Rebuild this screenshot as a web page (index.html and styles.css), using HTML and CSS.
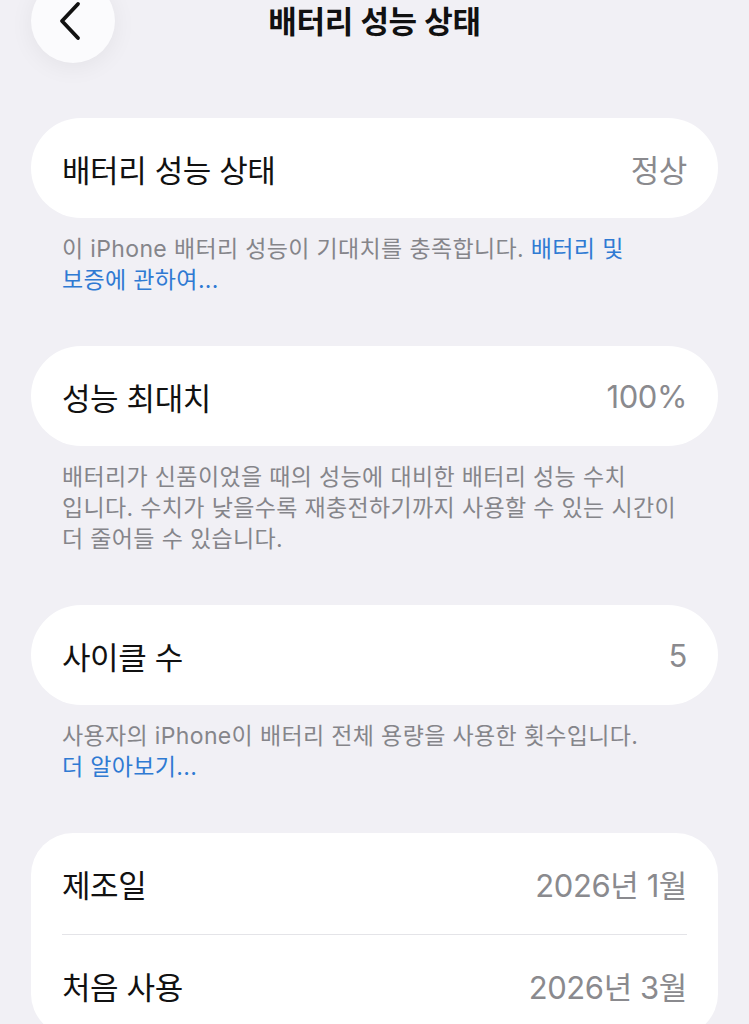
FILE: index.html
```html
<!DOCTYPE html>
<html lang="ko">
<head>
    <meta charset="UTF-8">
    <meta name="viewport" content="width=device-width, initial-scale=1.0">
    <title>배터리 성능 상태</title>
    <link rel="stylesheet" href="styles.css">
</head>
<body>
    <div class="header">
        <button class="back-button" aria-label="뒤로">
            <svg width="26" height="40" viewBox="0 0 26 40">
                <path d="M21 3 L5 20 L21 37" fill="none" stroke="#111" stroke-width="3.8" stroke-linecap="round" stroke-linejoin="round"/>
            </svg>
        </button>
        <h1>배터리 성능 상태</h1>
        <div></div>
    </div>

    <div class="section">
        <div class="card">
            <div class="row">
                <span class="label">배터리 성능 상태</span>
                <span class="value">정상</span>
            </div>
        </div>
        <p class="footer">이 iPhone 배터리 성능이 기대치를 충족합니다. <a href="#">배터리 및<br>보증에 관하여...</a></p>
    </div>

    <div class="section">
        <div class="card">
            <div class="row">
                <span class="label">성능 최대치</span>
                <span class="value">100%</span>
            </div>
        </div>
        <p class="footer">배터리가 신품이었을 때의 성능에 대비한 배터리 성능 수치<br>입니다. 수치가 낮을수록 재충전하기까지 사용할 수 있는 시간이<br>더 줄어들 수 있습니다.</p>
    </div>

    <div class="section">
        <div class="card">
            <div class="row">
                <span class="label">사이클 수</span>
                <span class="value">5</span>
            </div>
        </div>
        <p class="footer">사용자의 iPhone이 배터리 전체 용량을 사용한 횟수입니다.<br><a href="#">더 알아보기...</a></p>
    </div>

    <div class="section">
        <div class="card card-list">
            <div class="row">
                <span class="label">제조일</span>
                <span class="value">2026년 1월</span>
            </div>
            <div class="row">
                <span class="label">처음 사용</span>
                <span class="value">2026년 3월</span>
            </div>
        </div>
    </div>
</body>
</html>
```

FILE: styles.css
```css
body {
    font-family: Inter, "Noto Sans CJK KR", sans-serif;
    background-color: #f1f0f5;
    margin: 0;
    padding: 0 31px;
    color: #111;
    overflow: hidden;
}
.header {
    display: grid;
    grid-template-columns: 84px 1fr 84px;
    align-items: start;
    height: 118px;
}
.back-button {
    width: 84px;
    height: 84px;
    margin-top: -21px;
    border: none;
    border-radius: 50%;
    background-color: #fbfbfd;
    box-shadow: 0 4px 24px rgba(0, 0, 0, 0.06);
    display: flex;
    align-items: center;
    justify-content: center;
    padding: 0;
}
.back-button svg {
    margin-left: -6px;
}
.header h1 {
    margin: 0;
    text-align: center;
    font-size: 31px;
    font-weight: 600;
    line-height: 44px;
    letter-spacing: -0.3px;
}
.section {
    margin-bottom: 50px;
}
.card {
    background-color: #fff;
    border-radius: 50px;
}
.card-list {
    border-radius: 42px;
}
.row {
    height: 100px;
    padding: 0 31px;
    display: flex;
    justify-content: space-between;
    align-items: center;
    font-size: 31px;
    letter-spacing: -0.4px;
}
.card-list .row {
    height: 101px;
}
.card-list .row + .row {
    border-top: 1.5px solid #e4e4e8;
    margin: 0 31px;
    padding: 0;
}
.value {
    color: #8a8a8e;
}
.footer {
    margin: 0;
    padding: 16px 31px 0;
    font-size: 23px;
    line-height: 31px;
    letter-spacing: 0.35px;
    color: #85858a;
    white-space: nowrap;
}
.footer a {
    color: #2f7ad3;
    text-decoration: none;
}
```
